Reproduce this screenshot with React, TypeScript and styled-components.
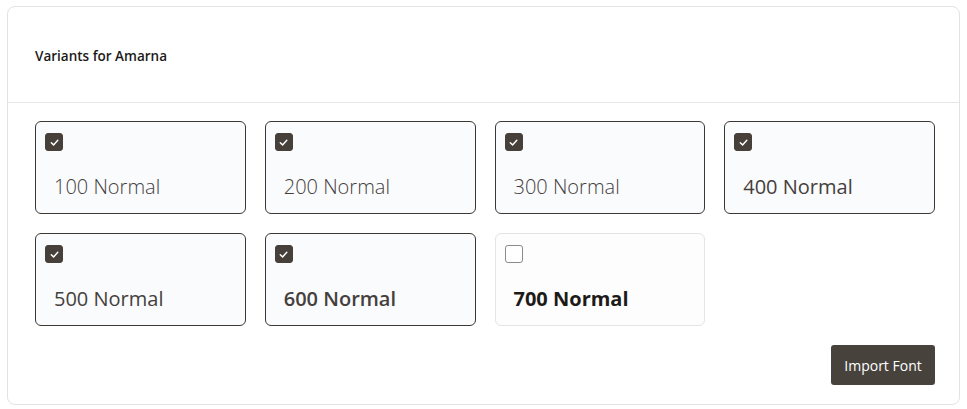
import styled, { createGlobalStyle } from 'styled-components'

const GlobalStyle = createGlobalStyle`
    body {
        margin: 0;
        background: #ffffff;
        font-family: 'Open Sans', 'Liberation Sans', sans-serif;
        color: #1f1d1b;
    }
    * {
        box-sizing: border-box;
    }
`

const Page = styled.div`
    padding: 6px 7px 4px 7px;
`

const Panel = styled.section`
    border: 1px solid #e3e3e3;
    border-radius: 8px;
    background: #ffffff;
`

const PanelHeader = styled.header`
    height: 96px;
    display: flex;
    align-items: center;
    padding: 0 27px;
    border-bottom: 1px solid #e6e6e6;
`

const Title = styled.h3`
    margin: 0;
    font-size: 13.5px;
    font-weight: 600;
    color: #1c1a18;
    padding-top: 2px;
`

const PanelBody = styled.div`
    padding: 18px 24px 19px 27px;
    display: flex;
    flex-direction: column;
`

const VariantGrid = styled.div`
    display: grid;
    grid-template-columns: repeat(4, 1fr);
    gap: 19px;
`

const VariantCard = styled.label<{ $checked: boolean }>`
    height: 93px;
    display: flex;
    flex-direction: column;
    padding: 11px 9px;
    border-radius: 6px;
    border: 1px solid ${(p) => (p.$checked ? '#3c3835' : '#e4e4e4')};
    background: ${(p) => (p.$checked ? '#fafbfd' : '#fdfdfd')};
    cursor: pointer;
`

const Box = styled.span<{ $checked: boolean }>`
    width: 18px;
    height: 18px;
    border-radius: 3px;
    display: flex;
    align-items: center;
    justify-content: center;
    background: ${(p) => (p.$checked ? '#463f3a' : '#ffffff')};
    border: 1px solid ${(p) => (p.$checked ? '#463f3a' : '#8a8a8a')};
`

const VariantName = styled.span<{ $weight: number }>`
    margin-top: 22px;
    padding-left: 9px;
    font-size: 20px;
    line-height: 28px;
    font-weight: ${(p) => p.$weight};
    color: ${(p) => (p.$weight >= 700 ? '#1d1b19' : '#45403c')};
`

const Actions = styled.div`
    display: flex;
    justify-content: flex-end;
    margin-top: 19px;
`

const ImportButton = styled.button`
    width: 104px;
    height: 40px;
    border: none;
    border-radius: 3px;
    background: #48423d;
    color: #ffffff;
    font-family: 'Open Sans', 'Liberation Sans', sans-serif;
    font-size: 14px;
    cursor: pointer;
`

const variants = [
    { weight: 100, checked: true },
    { weight: 200, checked: true },
    { weight: 300, checked: true },
    { weight: 400, checked: true },
    { weight: 500, checked: true },
    { weight: 600, checked: true },
    { weight: 700, checked: false },
]

const Check = () => (
    <svg width="11" height="11" viewBox="0 0 12 12" fill="none">
        <path
            d="M2.5 6.3 L5 8.6 L9.6 3.6"
            stroke="#ffffff"
            strokeWidth="1.6"
            strokeLinecap="round"
            strokeLinejoin="round"
        />
    </svg>
)

export default function App() {
    return (
        <>
            <GlobalStyle />
            <Page>
                <Panel>
                    <PanelHeader>
                        <Title>Variants for Amarna</Title>
                    </PanelHeader>
                    <PanelBody>
                        <VariantGrid>
                            {variants.map((v) => (
                                <VariantCard key={v.weight} $checked={v.checked}>
                                    <Box $checked={v.checked}>
                                        {v.checked && <Check />}
                                    </Box>
                                    <VariantName $weight={v.weight}>
                                        {v.weight} Normal
                                    </VariantName>
                                </VariantCard>
                            ))}
                        </VariantGrid>
                        <Actions>
                            <ImportButton>Import Font</ImportButton>
                        </Actions>
                    </PanelBody>
                </Panel>
            </Page>
        </>
    )
}
